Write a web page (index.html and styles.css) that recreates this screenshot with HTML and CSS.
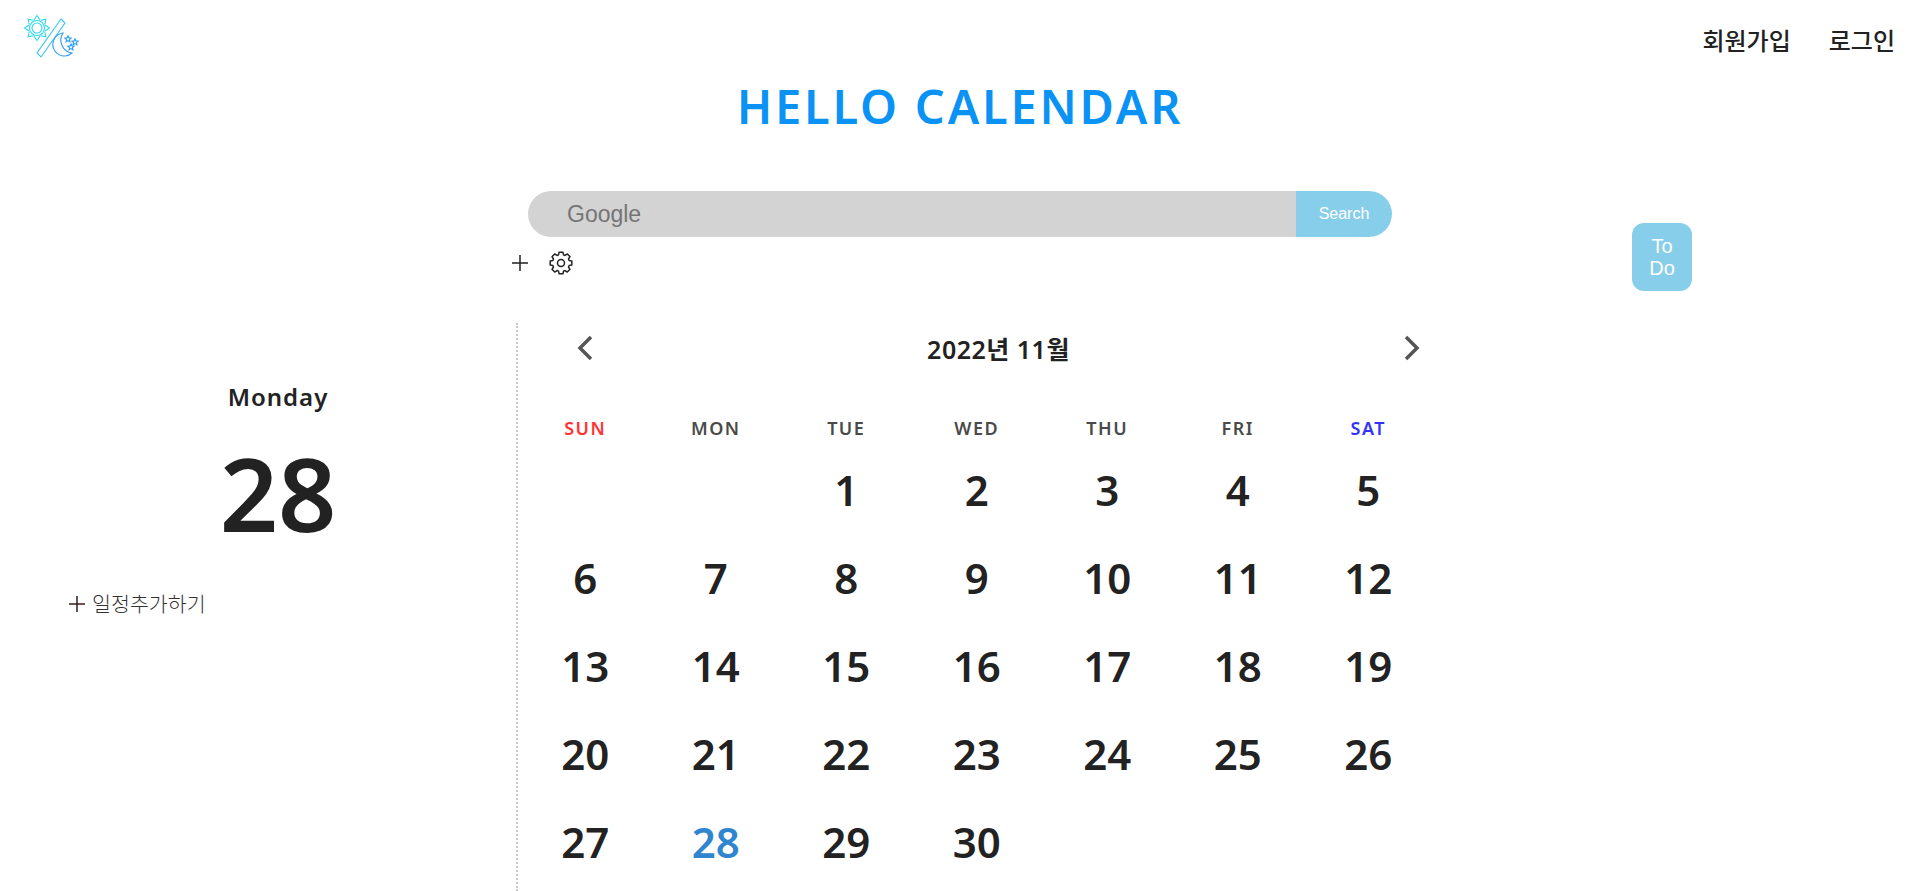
FILE: index.html
```html
<!DOCTYPE html>
<html lang="ko">
<head>
    <meta charset="UTF-8">
    <meta name="viewport" content="width=device-width, initial-scale=1.0">
    <title>Hello Calendar</title>
    <link rel="stylesheet" href="styles.css">
</head>
<body>
    <header class="top-bar">
        <a class="logo" href="#">
            <svg width="60" height="50" viewBox="0 0 60 50" fill="none">
                <defs>
                    <path id="ray" d="M-3 -8 0 -12.5 3 -8"/>
                    <path id="star" d="M0 -3.2l.9 2.1 2.2.2-1.700 1.500.5 2.200-1.900-1.200-1.900 1.200.5-2.200-1.700-1.500 2.200-.2Z"/>
                </defs>
                <g transform="translate(17 16)" stroke="#2fd8ee" stroke-width="1.1">
                    <circle r="5"/>
                    <circle r="7.5"/>
                    <use href="#ray"/>
                    <use href="#ray" transform="rotate(45)"/>
                    <use href="#ray" transform="rotate(90)"/>
                    <use href="#ray" transform="rotate(135)"/>
                    <use href="#ray" transform="rotate(180)"/>
                    <use href="#ray" transform="rotate(225)"/>
                    <use href="#ray" transform="rotate(270)"/>
                    <use href="#ray" transform="rotate(315)"/>
                </g>
                <path d="M41 7l4 4-24 34-4-4Z" stroke="#35c8f2" stroke-width="1.1"/>
                <path d="M43 21a11.5 11.5 0 1 0 9 20a13 13 0 0 1-9-20Z" stroke="#2e9cf4" stroke-width="1.1"/>
                <g stroke="#2e9cf4" stroke-width="1.1">
                    <use href="#star" transform="translate(48 27)"/>
                    <use href="#star" transform="translate(55 30)"/>
                    <use href="#star" transform="translate(51 35)"/>
                </g>
            </svg>
        </a>
        <nav class="top-nav">
            <a href="#">회원가입</a>
            <a href="#">로그인</a>
        </nav>
    </header>

    <h1 class="site-title">HELLO CALENDAR</h1>

    <section class="search-area">
        <div class="search-col">
            <form class="search-form">
                <input class="search-input" type="text" placeholder="Google">
                <button class="search-btn" type="button">Search</button>
            </form>
            <div class="tools">
                <svg width="18" height="18" viewBox="0 0 18 18" fill="none" stroke="#222" stroke-width="1.5"><path d="M9 1v16M1 9h16"/></svg>
                <svg width="24" height="24" viewBox="0 0 24 24" fill="none" stroke="#222" stroke-width="1.5" stroke-linejoin="round"><path d="M9.51 3.87 10.09 1.17H13.91L14.49 3.87 15.99 4.49 18.31 2.99 21.01 5.69 19.51 8.01 20.13 9.51 22.83 10.09V13.91L20.13 14.49 19.51 15.99 21.01 18.31 18.31 21.01 15.99 19.51 14.49 20.13 13.91 22.83H10.09L9.51 20.13 8.01 19.51 5.69 21.01 2.99 18.31 4.49 15.99 3.87 14.49 1.17 13.91V10.09L3.87 9.51 4.49 8.01 2.99 5.69 5.69 2.99 8.01 4.49Z"/><circle cx="12" cy="12" r="3.5"/></svg>
            </div>
        </div>
        <button class="todo-btn" type="button">To Do</button>
    </section>

    <main class="content">
        <aside class="today">
            <div class="today-name">Monday</div>
            <div class="today-num">28</div>
            <a class="add-plan" href="#">
                <svg width="18" height="18" viewBox="0 0 18 18" fill="none" stroke="#3a1a1a" stroke-width="1.5"><path d="M9 1v16M1 9h16"/></svg>
                일정추가하기
            </a>
        </aside>

        <section class="calendar">
            <div class="cal-head">
                <svg class="arrow" width="20" height="28" viewBox="0 0 20 28" fill="none" stroke="#555" stroke-width="3.5"><path d="M16 3 5 14l11 11"/></svg>
                <h2 class="cal-title">2022년 11월</h2>
                <svg class="arrow" width="20" height="28" viewBox="0 0 20 28" fill="none" stroke="#555" stroke-width="3.5"><path d="M4 3l11 11L4 25"/></svg>
            </div>
            <div class="week">
                <span class="sun">SUN</span><span>MON</span><span>TUE</span><span>WED</span><span>THU</span><span>FRI</span><span class="sat">SAT</span>
            </div>
            <div class="days">
                <span></span><span></span><span>1</span><span>2</span><span>3</span><span>4</span><span>5</span>
                <span>6</span><span>7</span><span>8</span><span>9</span><span>10</span><span>11</span><span>12</span>
                <span>13</span><span>14</span><span>15</span><span>16</span><span>17</span><span>18</span><span>19</span>
                <span>20</span><span>21</span><span>22</span><span>23</span><span>24</span><span>25</span><span>26</span>
                <span>27</span><span class="now">28</span><span>29</span><span>30</span>
            </div>
        </section>
    </main>
</body>
</html>
```

FILE: styles.css
```css
* {
    box-sizing: border-box;
}

html, body {
    height: 100%;
}

body {
    margin: 0;
    overflow: hidden;
    display: flex;
    flex-direction: column;
    font-family: "Noto Sans", "Noto Sans CJK KR", sans-serif;
    color: #222;
    background: #fff;
}

a {
    color: inherit;
    text-decoration: none;
}

.top-bar {
    display: flex;
    justify-content: space-between;
    align-items: flex-start;
    padding: 12px 25px 0 20px;
    height: 72px;
}

.logo {
    display: block;
    height: 50px;
}

.top-nav {
    display: flex;
    gap: 38px;
    padding-top: 15px;
    font-size: 24px;
    font-weight: 500;
    line-height: 28px;
}

.site-title {
    margin: 0;
    text-align: center;
    font-size: 47px;
    font-weight: 600;
    line-height: 68px;
    letter-spacing: 2.8px;
    color: #0a93f5;
}

.search-area {
    display: flex;
    margin-top: 51px;
    padding-left: 510px;
    height: 132px;
}

.search-col {
    width: 882px;
}

.search-form {
    display: flex;
    height: 46px;
    margin-left: 18px;
}

.search-input {
    flex: 1;
    min-width: 0;
    padding: 0 0 0 39px;
    border: none;
    outline: none;
    border-radius: 23px 0 0 23px;
    background: #d3d3d3;
    font-family: "Liberation Sans", Arial, sans-serif;
    font-size: 23px;
}

.search-input::placeholder {
    color: #757575;
}

.search-btn {
    width: 96px;
    border: none;
    border-radius: 0 23px 23px 0;
    background: #87ceeb;
    color: #fff;
    font-family: "Liberation Sans", Arial, sans-serif;
    font-size: 16px;
}

.tools {
    display: flex;
    align-items: center;
    gap: 20px;
    margin-top: 14px;
    padding-left: 1px;
}

.todo-btn {
    width: 60px;
    height: 68px;
    margin: 32px 0 0 240px;
    padding: 0 10px;
    border: none;
    border-radius: 12px;
    background: #87ceeb;
    color: #fff;
    font-family: "Liberation Sans", Arial, sans-serif;
    font-size: 20px;
    line-height: 22px;
}

.content {
    flex: 1;
    display: flex;
    min-height: 0;
}

.today {
    width: 518px;
    padding: 58px 0 0 0;
    border-right: 2px dotted #c8c8c8;
    text-align: center;
}

.today-name {
    padding-left: 40px;
    font-size: 24px;
    font-weight: 600;
    letter-spacing: 1px;
    line-height: 32px;
}

.today-num {
    padding-left: 40px;
    margin-top: 25px;
    font-size: 102px;
    font-weight: 600;
    line-height: 110px;
}

.add-plan {
    display: flex;
    align-items: center;
    gap: 6px;
    margin: 42px 0 0 68px;
    font-size: 20.6px;
    font-weight: 300;
    line-height: 28px;
    color: #333;
}

.calendar {
    width: 916px;
    padding-left: 2px;
}

.cal-head {
    display: flex;
    align-items: center;
    justify-content: space-between;
    height: 52px;
    padding: 0 12px 0 55px;
}

.arrow {
    flex: none;
    margin-top: -2px;
}

.cal-title {
    margin: 0;
    font-size: 25px;
    font-weight: 600;
    letter-spacing: .5px;
    line-height: 44px;
}

.week,
.days {
    display: grid;
    grid-template-columns: repeat(7, 130.5px);
    text-align: center;
}

.week {
    margin-top: 40px;
    font-size: 18px;
    font-weight: 600;
    letter-spacing: 1.5px;
    line-height: 26px;
    color: #4a4a4a;
}

.sun {
    color: #f33;
}

.sat {
    color: #33f;
}

.days {
    grid-auto-rows: 88px;
    margin-top: 5px;
    font-size: 42px;
    font-weight: 600;
    line-height: 88px;
}

.now {
    color: #2f86cf;
}
```
